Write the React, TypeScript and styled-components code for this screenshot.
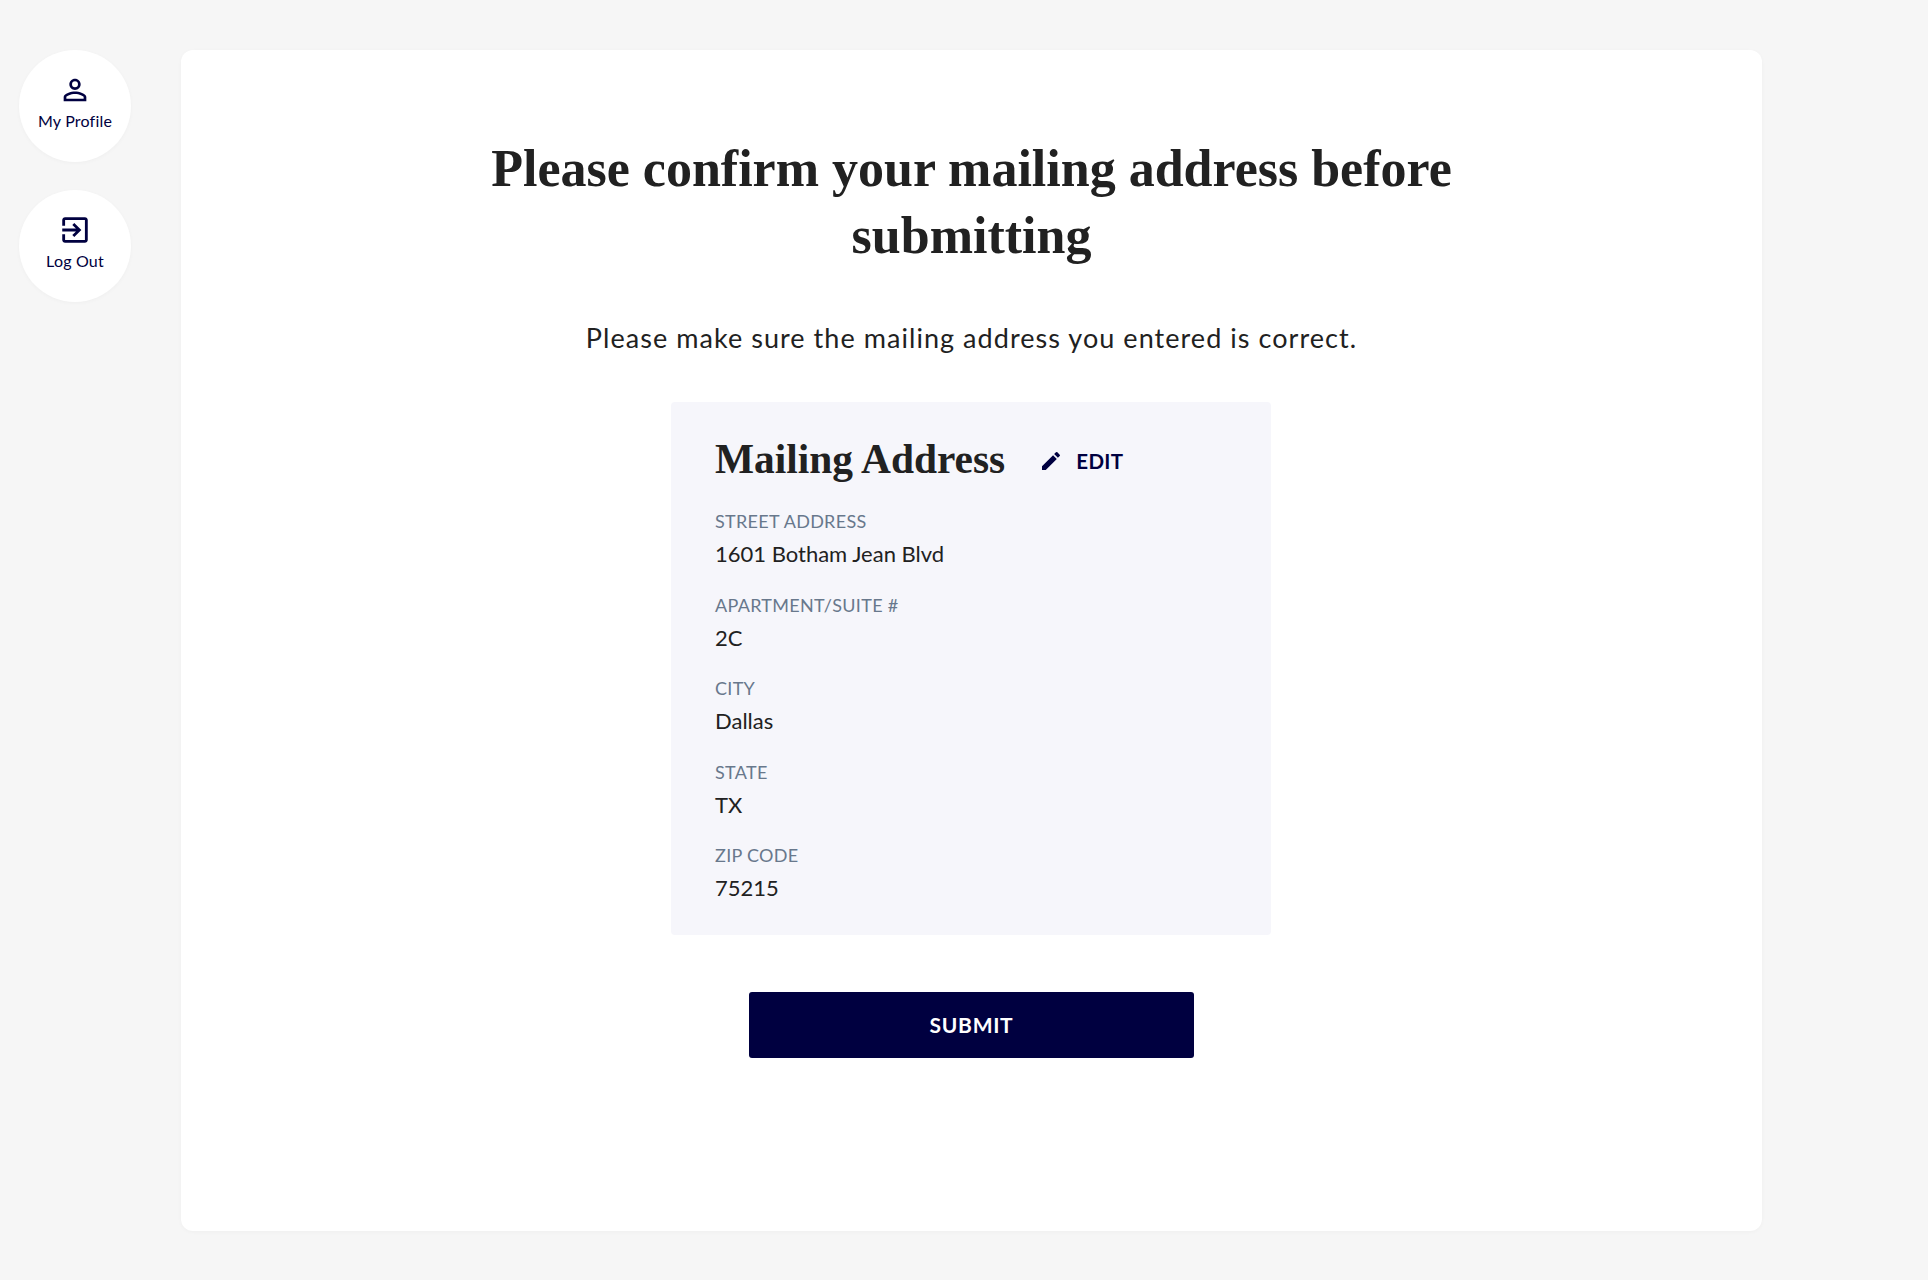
import React from 'react';
import styled, {createGlobalStyle} from 'styled-components';

const GlobalStyle = createGlobalStyle`
  html, body {
    margin: 0;
    background: #f6f6f6;
  }
  body {
    font-family: "Lato", "Open Sans", sans-serif;
  }
`

const Page = styled.div`
  display: flex;
  align-items: flex-start;
  width: 1928px;
  height: 1280px;
  padding: 50px 0 0 19px;
  box-sizing: border-box;
`
const Sidebar = styled.nav`
  display: flex;
  flex-direction: column;
  gap: 28px;
  width: 162px;
  flex-shrink: 0;
`
const NavCircle = styled.a`
  width: 112px;
  height: 112px;
  border-radius: 50%;
  background: #fff;
  box-shadow: 0 1px 4px rgba(0, 0, 0, 0.03);
  display: flex;
  flex-direction: column;
  align-items: center;
  justify-content: center;
  gap: 4px;
  color: #000040;
  font-size: 16px;
  line-height: 19px;
  letter-spacing: 0.2px;
  padding-bottom: 10px;
  box-sizing: border-box;
`
const Card = styled.main`
  width: 1581px;
  height: 1181px;
  background: #fff;
  border-radius: 12px;
  box-shadow: 0 1px 4px rgba(0, 0, 0, 0.03);
  display: flex;
  flex-direction: column;
  align-items: center;
  padding-top: 85px;
  box-sizing: border-box;
`
const Heading = styled.h1`
  margin: 0;
  width: 1000px;
  text-align: center;
  font-family: "Liberation Serif", serif;
  font-weight: 700;
  font-size: 52px;
  line-height: 67px;
  color: #212121;
`
const Intro = styled.p`
  margin: 51px 0 0;
  font-size: 27px;
  line-height: 36px;
  letter-spacing: 1.05px;
  color: #212121;
`
const AddressPanel = styled.section`
  margin: 46px 1px 0 0;
  width: 600px;
  height: 533px;
  padding: 33px 44px 0;
  box-sizing: border-box;
  background: #f6f6fb;
  border-radius: 4px;
`
const PanelHeader = styled.div`
  display: flex;
  align-items: center;
  height: 48px;
  margin-bottom: 26px;
`
const PanelTitle = styled.h2`
  margin: 0;
  font-family: "Liberation Serif", serif;
  font-weight: 700;
  font-size: 41.4px;
  line-height: 48px;
  color: #212121;
`
const EditLink = styled.a`
  display: flex;
  align-items: center;
  gap: 13px;
  margin-left: 34px;
  padding-top: 4px;
  font-size: 20.5px;
  font-weight: 700;
  letter-spacing: 0.4px;
  color: #000040;
`
const Field = styled.div`
  display: flex;
  flex-direction: column;
  height: 83.6px;
`
const FieldLabel = styled.span`
  font-size: 18px;
  line-height: 24px;
  letter-spacing: 0.3px;
  color: #68788c;
`
const FieldValue = styled.span`
  margin-top: 6px;
  font-size: 22px;
  line-height: 30px;
  color: #212121;
`
const SubmitButton = styled.button`
  margin-top: 57px;
  width: 445px;
  height: 66px;
  padding: 0 0 2px;
  border: none;
  border-radius: 3px;
  background: #000040;
  color: #fff;
  font-family: inherit;
  font-size: 21px;
  font-weight: 700;
  letter-spacing: 0.7px;
`

const fields = [
    {label: 'STREET ADDRESS', value: '1601 Botham Jean Blvd'},
    {label: 'APARTMENT/SUITE #', value: '2C'},
    {label: 'CITY', value: 'Dallas'},
    {label: 'STATE', value: 'TX'},
    {label: 'ZIP CODE', value: '75215'},
]

const ProfileIcon = () => (
    <svg width="34" height="34" viewBox="0 0 24 24" fill="#000040">
        <path d="M12 5.9a2.1 2.1 0 1 1 0 4.2 2.1 2.1 0 0 1 0-4.2m0 9c2.97 0 6.1 1.46 6.1 2.1v1.1H5.9V17c0-.64 3.13-2.1 6.1-2.1M12 4C9.79 4 8 5.79 8 8s1.79 4 4 4 4-1.79 4-4-1.79-4-4-4zm0 9c-2.67 0-8 1.34-8 4v3h16v-3c0-2.66-5.33-4-8-4z"/>
    </svg>
)

const LogoutIcon = () => (
    <svg width="34" height="34" viewBox="0 0 24 24" fill="#000040">
        <path d="M10.09 15.59L11.5 17l5-5-5-5-1.41 1.41L12.67 11H3v2h9.67l-2.58 2.59zM19 3H5c-1.11 0-2 .9-2 2v4h2V5h14v14H5v-4H3v4c0 1.1.89 2 2 2h14c1.1 0 2-.9 2-2V5c0-1.1-.9-2-2-2z"/>
    </svg>
)

const PencilIcon = () => (
    <svg width="24" height="24" viewBox="0 0 24 24" fill="#000040">
        <path d="M3 17.25V21h3.75L17.81 9.94l-3.75-3.75L3 17.25zM20.71 7.04a1 1 0 0 0 0-1.41l-2.34-2.34a1 1 0 0 0-1.41 0l-1.83 1.83 3.75 3.75 1.83-1.83z"/>
    </svg>
)

const App: React.FC = () => {
    return (
        <Page>
            <GlobalStyle/>
            <Sidebar>
                <NavCircle><ProfileIcon/>My Profile</NavCircle>
                <NavCircle><LogoutIcon/>Log Out</NavCircle>
            </Sidebar>
            <Card>
                <Heading>Please confirm your mailing address before submitting</Heading>
                <Intro>Please make sure the mailing address you entered is correct.</Intro>
                <AddressPanel>
                    <PanelHeader>
                        <PanelTitle>Mailing Address</PanelTitle>
                        <EditLink><PencilIcon/>EDIT</EditLink>
                    </PanelHeader>
                    {fields.map(field => (
                        <Field key={field.label}>
                            <FieldLabel>{field.label}</FieldLabel>
                            <FieldValue>{field.value}</FieldValue>
                        </Field>
                    ))}
                </AddressPanel>
                <SubmitButton>SUBMIT</SubmitButton>
            </Card>
        </Page>
    )
}
export default App;
